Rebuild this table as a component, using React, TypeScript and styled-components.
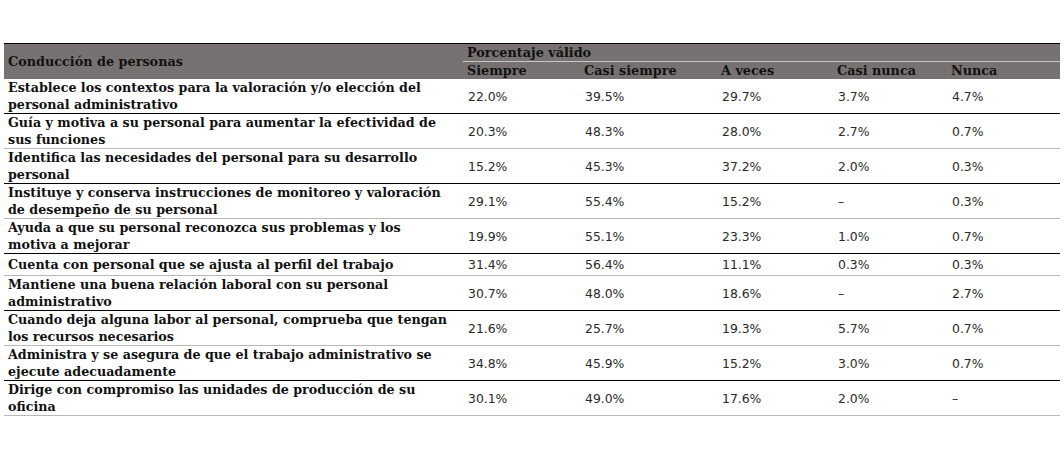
import React from 'react';
import styled, { createGlobalStyle } from 'styled-components';

const GlobalStyle = createGlobalStyle`
    html, body {
        margin: 0;
        padding: 0;
        background: #ffffff;
    }
`;

const Page = styled.div`
    padding: 43px 4px 0 4px;
`;

const Table = styled.table`
    width: 1056px;
    border-collapse: collapse;
    table-layout: fixed;
    border-top: 1px solid #000;
`;

const HeadRow = styled.tr`
    background: #777271;
`;

const HeadCell = styled.th<{ $line?: boolean }>`
    font-family: 'DejaVu Serif', serif;
    font-weight: bold;
    font-size: 12.8px;
    line-height: 17px;
    color: #111;
    text-align: left;
    padding: 0 4px;
    white-space: nowrap;
    border-bottom: ${(p) => (p.$line ? '1px solid #c9c5c3' : 'none')};
`;

const Row = styled.tr<{ $dark: boolean }>`
    border-bottom: 1px solid ${(p) => (p.$dark ? '#000' : '#b9b9b9')};
`;

const Label = styled.td`
    font-family: 'DejaVu Serif', serif;
    font-weight: bold;
    font-size: 12.7px;
    line-height: 17px;
    color: #111;
    padding: 0 4px;
    white-space: nowrap;
    vertical-align: middle;
`;

const Value = styled.td`
    font-family: 'DejaVu Sans', sans-serif;
    font-size: 12.4px;
    line-height: 17px;
    color: #2a2a2a;
    padding: 2px 5px;
    vertical-align: middle;
`;

type Item = { label: string[]; values: string[] };

const items: Item[] = [
    { label: ['Establece los contextos para la valoración y/o elección del', 'personal administrativo'], values: ['22.0%', '39.5%', '29.7%', '3.7%', '4.7%'] },
    { label: ['Guía y motiva a su personal para aumentar la efectividad de', 'sus funciones'], values: ['20.3%', '48.3%', '28.0%', '2.7%', '0.7%'] },
    { label: ['Identifica las necesidades del personal para su desarrollo', 'personal'], values: ['15.2%', '45.3%', '37.2%', '2.0%', '0.3%'] },
    { label: ['Instituye y conserva instrucciones de monitoreo y valoración', 'de desempeño de su personal'], values: ['29.1%', '55.4%', '15.2%', '–', '0.3%'] },
    { label: ['Ayuda a que su personal reconozca sus problemas y los', 'motiva a mejorar'], values: ['19.9%', '55.1%', '23.3%', '1.0%', '0.7%'] },
    { label: ['Cuenta con personal que se ajusta al perfil del trabajo'], values: ['31.4%', '56.4%', '11.1%', '0.3%', '0.3%'] },
    { label: ['Mantiene una buena relación laboral con su personal', 'administrativo'], values: ['30.7%', '48.0%', '18.6%', '–', '2.7%'] },
    { label: ['Cuando deja alguna labor al personal, comprueba que tengan', 'los recursos necesarios'], values: ['21.6%', '25.7%', '19.3%', '5.7%', '0.7%'] },
    { label: ['Administra y se asegura de que el trabajo administrativo se', 'ejecute adecuadamente'], values: ['34.8%', '45.9%', '15.2%', '3.0%', '0.7%'] },
    { label: ['Dirige con compromiso las unidades de producción de su', 'oficina'], values: ['30.1%', '49.0%', '17.6%', '2.0%', '–'] },
];

const columns = ['Siempre', 'Casi siempre', 'A veces', 'Casi nunca', 'Nunca'];
const widths = [459, 117, 137, 116, 114, 113];

const App = () => {
    return (
        <Page>
            <GlobalStyle />
            <Table>
                <colgroup>
                    {widths.map((w, i) => (
                        <col key={i} style={{ width: w }} />
                    ))}
                </colgroup>
                <thead>
                    <HeadRow>
                        <HeadCell rowSpan={2}>Conducción de personas</HeadCell>
                        <HeadCell colSpan={5} $line>
                            Porcentaje válido
                        </HeadCell>
                    </HeadRow>
                    <HeadRow>
                        {columns.map((c) => (
                            <HeadCell key={c}>{c}</HeadCell>
                        ))}
                    </HeadRow>
                </thead>
                <tbody>
                    {items.map((it, i) => (
                        <Row key={i} $dark={i % 2 === 0}>
                            <Label>
                                {it.label.map((l, j) => (
                                    <React.Fragment key={j}>
                                        {j > 0 && <br />}
                                        {l}
                                    </React.Fragment>
                                ))}
                            </Label>
                            {it.values.map((v, j) => (
                                <Value key={j}>{v}</Value>
                            ))}
                        </Row>
                    ))}
                </tbody>
            </Table>
        </Page>
    );
};

export default App;
